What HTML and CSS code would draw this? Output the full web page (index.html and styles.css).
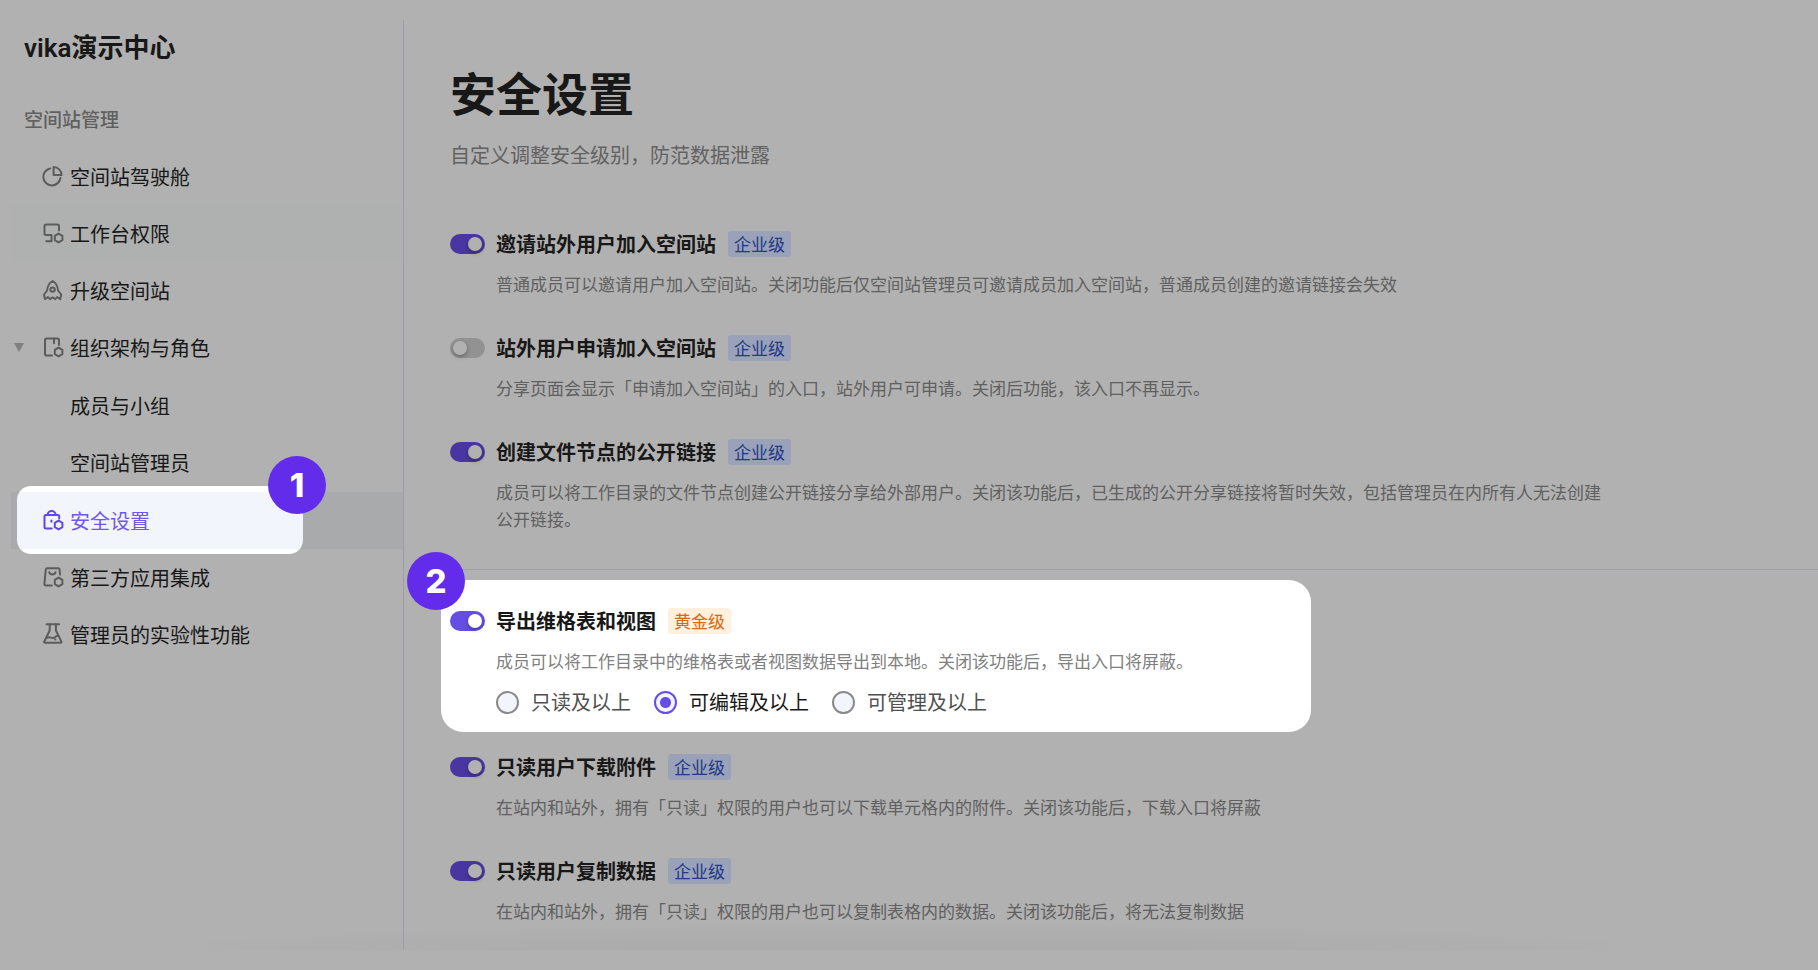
FILE: index.html
```html
<!DOCTYPE html>
<html lang="zh-CN">
<head>
    <meta charset="UTF-8">
    <meta name="viewport" content="width=device-width, initial-scale=1.0">
    <title>安全设置</title>
    <link rel="stylesheet" href="styles.css">
</head>
<body>
    <div class="page">
        <aside class="sidebar">
            <h2 class="space_name">vika演示中心</h2>
            <p class="group_name">空间站管理</p>
            <nav>
                <ul class="menu">
                    <li><a class="menu_item" href="#">
                        <svg class="icon" viewBox="0 0 23 23"><path d="M9.2 3.4A8.6 8.6 0 1 0 19.4 13"/><path d="M12.6 2v8h8a8 8 0 0 0-8-8z"/></svg>
                        <span>空间站驾驶舱</span></a></li>
                    <li><a class="menu_item hover" href="#">
                        <svg class="icon" viewBox="0 0 23 23"><path d="M18 8.5V4a1.5 1.5 0 0 0-1.5-1.5H5A1.5 1.5 0 0 0 3.5 4v7.5A1.5 1.5 0 0 0 5 13h5.5v6.3H5.3"/><path d="M17.6 11.6l3.8 2.2v4.4l-3.8 2.2-3.8-2.2v-4.4z"/></svg>
                        <span>工作台权限</span></a></li>
                    <li><a class="menu_item" href="#">
                        <svg class="icon" viewBox="0 0 23 23"><path d="M11.6 2C8.4 3.8 6.4 7.2 6.2 11.5L3 15.5l.9 4.6 3.1-2 2 2 2.6-1.8 2.6 1.8 2-2 3.1 2 .9-4.6-3.2-4C16.8 7.2 14.8 3.8 11.6 2z"/><circle cx="11.6" cy="10.6" r="2.2"/></svg>
                        <span>升级空间站</span></a></li>
                    <li><a class="menu_item" href="#">
                        <span class="arrow"></span>
                        <svg class="icon" viewBox="0 0 23 23"><path d="M18 9V4a1.5 1.5 0 0 0-1.5-1.5h-11A1.5 1.5 0 0 0 4 4v14a1.5 1.5 0 0 0 1.5 1.5H11"/><path d="M13 2.5v4.7"/><path d="M17.6 11.6l3.8 2.2v4.4l-3.8 2.2-3.8-2.2v-4.4z"/></svg>
                        <span>组织架构与角色</span></a>
                        <ul class="submenu">
                            <li><a class="menu_item" href="#">成员与小组</a></li>
                            <li><a class="menu_item" href="#">空间站管理员</a></li>
                        </ul>
                    </li>
                    <li><a class="menu_item active" href="#">
                        <svg class="icon" viewBox="0 0 23 23"><path d="M18.2 9.5V7.6a1.5 1.5 0 0 0-1.5-1.5H5A1.5 1.5 0 0 0 3.5 7.6V18A1.5 1.5 0 0 0 5 19.5h5.8"/><path d="M6.6 6a4 4 0 0 1 8 0"/><path d="M10.4 11.4v1.4"/><path d="M17.6 11.6l3.8 2.2v4.4l-3.8 2.2-3.8-2.2v-4.4z"/></svg>
                        <span>安全设置</span>
                        <span class="step step_menu">1</span></a></li>
                    <li><a class="menu_item" href="#">
                        <svg class="icon" viewBox="0 0 23 23"><path d="M19 8.5l-.4-5a1.2 1.2 0 0 0-1.2-1.2H6a1.2 1.2 0 0 0-1.2 1.2L3.4 18a1.4 1.4 0 0 0 1.4 1.5h6"/><path d="M8.2 6.2c.8 2.9 5.6 2.9 6.4 0"/><path d="M17.6 11.6l3.8 2.2v4.4l-3.8 2.2-3.8-2.2v-4.4z"/></svg>
                        <span>第三方应用集成</span></a></li>
                    <li><a class="menu_item" href="#">
                        <svg class="icon" viewBox="0 0 23 23"><path d="M5.5 1.3h12.6"/><path d="M8.7 1.3v6.2L3.2 18.6a.8.8 0 0 0 .8 1.2h15.6a.8.8 0 0 0 .8-1.2L14.9 7.5V1.3"/><path d="M6 14.8c3-1.8 4.5 1.2 7 0 1.3-.7 1.8-1.8 3.6-2"/><path d="M14.2 16.6h.2"/></svg>
                        <span>管理员的实验性功能</span></a></li>
                </ul>
            </nav>
        </aside>

        <main class="content">
            <h1>安全设置</h1>
            <p class="subtitle">自定义调整安全级别，防范数据泄露</p>

            <section class="settings">
                <div class="setting">
                    <div class="setting_title">
                        <input type="checkbox" class="switch" id="invite" checked>
                        <label for="invite">邀请站外用户加入空间站</label>
                        <span class="tag">企业级</span>
                    </div>
                    <p class="desc">普通成员可以邀请用户加入空间站。关闭功能后仅空间站管理员可邀请成员加入空间站，普通成员创建的邀请链接会失效</p>
                </div>
                <div class="setting">
                    <div class="setting_title">
                        <input type="checkbox" class="switch" id="apply">
                        <label for="apply">站外用户申请加入空间站</label>
                        <span class="tag">企业级</span>
                    </div>
                    <p class="desc">分享页面会显示「申请加入空间站」的入口，站外用户可申请。关闭后功能，该入口不再显示。</p>
                </div>
                <div class="setting">
                    <div class="setting_title">
                        <input type="checkbox" class="switch" id="share" checked>
                        <label for="share">创建文件节点的公开链接</label>
                        <span class="tag">企业级</span>
                    </div>
                    <p class="desc">成员可以将工作目录的文件节点创建公开链接分享给外部用户。关闭该功能后，已生成的公开分享链接将暂时失效，包括管理员在内所有人无法创建公开链接。</p>
                </div>
            </section>

            <section class="settings second">
                <div class="setting spotlight">
                    <span class="step step_setting">2</span>
                    <div class="setting_title">
                        <input type="checkbox" class="switch" id="export" checked>
                        <label for="export">导出维格表和视图</label>
                        <span class="tag gold">黄金级</span>
                    </div>
                    <p class="desc">成员可以将工作目录中的维格表或者视图数据导出到本地。关闭该功能后，导出入口将屏蔽。</p>
                    <div class="radios">
                        <label><input type="radio" name="level">只读及以上</label>
                        <label><input type="radio" name="level" checked>可编辑及以上</label>
                        <label><input type="radio" name="level">可管理及以上</label>
                    </div>
                </div>
                <div class="setting">
                    <div class="setting_title">
                        <input type="checkbox" class="switch" id="download" checked>
                        <label for="download">只读用户下载附件</label>
                        <span class="tag">企业级</span>
                    </div>
                    <p class="desc">在站内和站外，拥有「只读」权限的用户也可以下载单元格内的附件。关闭该功能后，下载入口将屏蔽</p>
                </div>
                <div class="setting">
                    <div class="setting_title">
                        <input type="checkbox" class="switch" id="copy" checked>
                        <label for="copy">只读用户复制数据</label>
                        <span class="tag">企业级</span>
                    </div>
                    <p class="desc">在站内和站外，拥有「只读」权限的用户也可以复制表格内的数据。关闭该功能后，将无法复制数据</p>
                </div>
            </section>
        </main>
    </div>
</body>
</html>
```
FILE: styles.css
```css
* {
    box-sizing: border-box;
}
body {
    margin: 0;
    background-color: #b1b1b1;
    color: #181818;
    font-family: "Noto Sans CJK SC", sans-serif;
    font-size: 20px;
}
h1, h2, p, ul {
    margin: 0;
    padding: 0;
}
ul {
    list-style: none;
}
.page {
    display: flex;
    min-height: 100vh;
    padding: 20px 0;
    /* soft shadow along the bottom edge */
    background: radial-gradient(ellipse 43% 26px at 50% 100%, #acacac 40%, #b1b1b1) no-repeat 0 0 / 100% calc(100% - 20px);
}

/* sidebar */
.sidebar {
    flex: none;
    width: 404px;
    padding: 12px 0 0 11px;
    border-right: 1px solid #9f9da8;
}
.space_name {
    padding-left: 13px;
    font-family: Roboto, "Noto Sans CJK SC", sans-serif;
    font-size: 26px;
    font-weight: 600;
    line-height: 32px;
}
.group_name {
    margin: 41px 0 15px;
    padding-left: 13px;
    color: #606060;
    font-size: 19px;
    font-weight: 500;
    line-height: 28px;
}
.menu_item {
    position: relative;
    display: flex;
    align-items: center;
    gap: 6px;
    height: 57px;
    padding-left: 30px;
    color: #181818;
    text-decoration: none;
}
.menu_item.hover {
    background-color: #aeb1b0;
}
.submenu {
    padding: 1px 0;
}
.submenu .menu_item {
    padding-left: 59px;
}
.icon {
    width: 23px;
    height: 23px;
    fill: none;
    stroke: #5c5c5c;
    stroke-width: 2;
    stroke-linecap: round;
    stroke-linejoin: round;
}
.arrow {
    position: absolute;
    left: 3px;
    border-top: 9px solid #808080;
    border-left: 5px solid transparent;
    border-right: 5px solid transparent;
}
.menu_item.active {
    z-index: 1;
    background-color: #a8aaac;
    color: #7057ea;
}
.menu_item.active .icon {
    stroke: #6246e5;
}
/* highlighted window around the active item */
.menu_item.active::before {
    content: "";
    position: absolute;
    z-index: -1;
    top: -6px;
    bottom: -5px;
    left: 6px;
    width: 286px;
    border-radius: 14px;
    background: linear-gradient(#fff 6px, #f2f5fb 6px, #f2f5fb calc(100% - 5px), #fff calc(100% - 5px));
}

/* numbered steps */
.step {
    position: absolute;
    width: 58px;
    height: 58px;
    border-radius: 50%;
    background-color: #632ceb;
    color: #fff;
    font-family: Inter, Arial, sans-serif;
    font-size: 33px;
    font-weight: 800;
    line-height: 58px;
    text-align: center;
}
.step_menu {
    top: -36px;
    left: 257px;
}
.step_setting {
    top: -55px;
    left: -43px;
}

/* content */
.content {
    flex: 1;
    min-width: 0;
    padding: 38px 0 0 46px;
}
h1 {
    font-size: 46px;
    font-weight: 600;
    line-height: 66px;
}
.subtitle {
    margin: 17px 0 61px;
    color: #626262;
    line-height: 28px;
}
.settings {
    display: flex;
    flex-direction: column;
    gap: 37px;
}
.settings.second {
    margin-top: 37px;
    padding-top: 37px;
    border-top: 1px solid #9f9da8;
}
.setting {
    position: relative;
    z-index: 0;
}
.setting_title {
    display: flex;
    align-items: center;
    height: 28px;
    font-weight: 600;
    line-height: 28px;
}
.setting_title label {
    margin: 0 12px 0 11px;
}
.tag {
    padding: 0 6px;
    border-radius: 3px;
    background-color: #99a2b9;
    color: #233886;
    font-size: 17px;
    font-weight: 400;
    line-height: 26px;
}
.tag.gold {
    background-color: #fff1de;
    color: #d9690f;
}
.desc {
    margin: 12px 204px 0 46px;
    color: #606060;
    font-size: 17px;
    line-height: 27px;
}
.switch {
    appearance: none;
    flex: none;
    width: 35px;
    height: 20px;
    margin: 0;
    padding: 3px;
    border-radius: 10px;
    background-color: #929292;
}
.switch::before {
    content: "";
    display: block;
    width: 14px;
    height: 14px;
    border-radius: 50%;
    background-color: #b1b1b1;
    box-shadow: 0 2px 4px rgba(0, 0, 0, 0.3);
}
.switch:checked {
    background-color: #4936a0;
}
.switch:checked::before {
    margin-left: 15px;
}

.spotlight::before {
    content: "";
    position: absolute;
    z-index: -1;
    top: -27px;
    bottom: -16px;
    left: -9px;
    width: 870px;
    border-radius: 22px;
    background-color: #fff;
}
.spotlight .desc {
    color: #808080;
}
.spotlight .switch:checked {
    background-color: #654ee5;
}
.spotlight .switch::before {
    background-color: #fff;
}
.radios {
    display: flex;
    gap: 23px;
    margin: 14px 0 0 46px;
    line-height: 28px;
}
.radios label {
    display: flex;
    align-items: center;
    gap: 12px;
    color: #505050;
}
.radios input {
    appearance: none;
    width: 23px;
    height: 23px;
    margin: 0;
    border: 2px solid #8a8a8a;
    border-radius: 50%;
    background-color: #f2f5fb;
}
.radios input:checked {
    border-color: #654ee5;
    background: radial-gradient(circle, #654ee5 5px, #f2f5fb 6px);
}
.radios label:has(:checked) {
    color: #181818;
}
```
